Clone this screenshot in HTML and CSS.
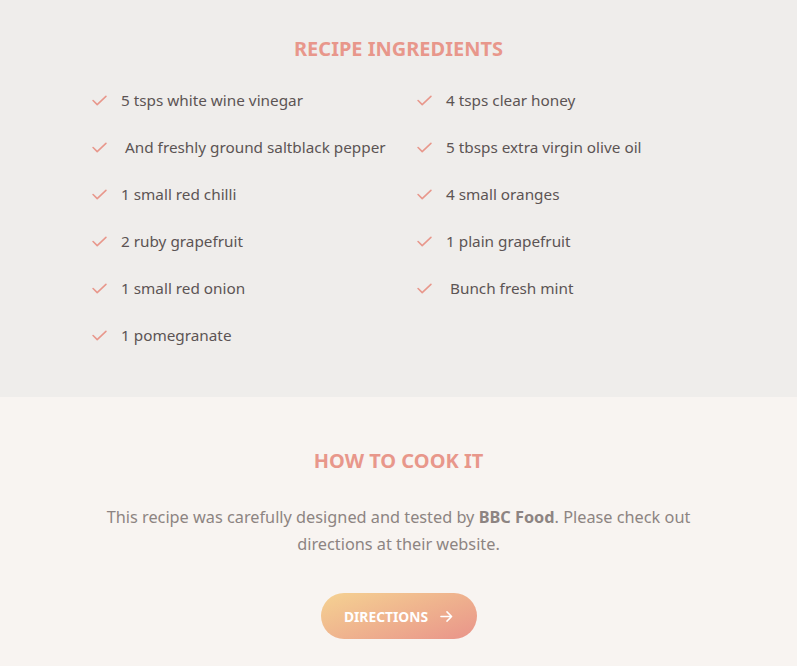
FILE: index.html
```html
<!DOCTYPE html>
<html lang="en">
<head>
<meta charset="utf-8">
<link rel="stylesheet" href="styles.css">
</head>
<body>
<section class="ingredients">
  <h2 class="title">RECIPE INGREDIENTS</h2>
  <ul class="list">
    <li><svg class="check" viewBox="0 0 16 12"><path d="M1 6 L5.5 10.5 L15 1.5"/></svg><span>5 tsps white wine vinegar</span></li>
    <li><svg class="check" viewBox="0 0 16 12"><path d="M1 6 L5.5 10.5 L15 1.5"/></svg><span>4 tsps clear honey</span></li>
    <li><svg class="check" viewBox="0 0 16 12"><path d="M1 6 L5.5 10.5 L15 1.5"/></svg><span class="lead">And freshly ground saltblack pepper</span></li>
    <li><svg class="check" viewBox="0 0 16 12"><path d="M1 6 L5.5 10.5 L15 1.5"/></svg><span>5 tbsps extra virgin olive oil</span></li>
    <li><svg class="check" viewBox="0 0 16 12"><path d="M1 6 L5.5 10.5 L15 1.5"/></svg><span>1 small red chilli</span></li>
    <li><svg class="check" viewBox="0 0 16 12"><path d="M1 6 L5.5 10.5 L15 1.5"/></svg><span>4 small oranges</span></li>
    <li><svg class="check" viewBox="0 0 16 12"><path d="M1 6 L5.5 10.5 L15 1.5"/></svg><span>2 ruby grapefruit</span></li>
    <li><svg class="check" viewBox="0 0 16 12"><path d="M1 6 L5.5 10.5 L15 1.5"/></svg><span>1 plain grapefruit</span></li>
    <li><svg class="check" viewBox="0 0 16 12"><path d="M1 6 L5.5 10.5 L15 1.5"/></svg><span>1 small red onion</span></li>
    <li><svg class="check" viewBox="0 0 16 12"><path d="M1 6 L5.5 10.5 L15 1.5"/></svg><span class="lead">Bunch fresh mint</span></li>
    <li><svg class="check" viewBox="0 0 16 12"><path d="M1 6 L5.5 10.5 L15 1.5"/></svg><span>1 pomegranate</span></li>
  </ul>
</section>
<section class="cook">
  <h2 class="title">HOW TO COOK IT</h2>
  <p class="desc">This recipe was carefully designed and tested by <strong>BBC Food</strong>. Please check out directions at their website.</p>
  <a class="btn" href="#">DIRECTIONS <svg class="arrow" viewBox="0 0 14 14"><path d="M1 7 H12.5 M7.5 2 L12.5 7 L7.5 12"/></svg></a>
</section>
</body>
</html>
```
FILE: styles.css
```css
* { box-sizing: border-box; }
html, body { margin: 0; padding: 0; }
body {
  font-family: "Noto Sans", "Open Sans", sans-serif;
  width: 797px;
  height: 666px;
  overflow: hidden;
  background: #f8f4f1;
}
.title {
  margin: 0;
  text-align: center;
  color: #e8978b;
  font-size: 20px;
  font-weight: 700;
  line-height: 26px;
}
.ingredients {
  background: #efedeb;
  height: 397px;
  padding-top: 36px;
}
.list {
  list-style: none;
  margin: 26px 0 0 92px;
  padding: 0;
  display: grid;
  grid-template-columns: 325px 325px;
  row-gap: 23px;
}
.list li {
  display: flex;
  align-items: center;
  height: 24px;
  color: #5c5454;
  font-size: 15.3px;
}
.check {
  width: 15px;
  height: 11px;
  margin-right: 14px;
  flex: none;
}
.check path {
  fill: none;
  stroke: #e8978b;
  stroke-width: 1.7;
  stroke-linecap: round;
  stroke-linejoin: round;
}
.lead { padding-left: 4px; }
.cook {
  padding-top: 51px;
  text-align: center;
}
.desc {
  margin: 30px auto 0;
  width: 620px;
  color: #8d8482;
  font-size: 16.3px;
  line-height: 27px;
}
.desc strong { font-weight: 700; }
.btn {
  display: inline-flex;
  align-items: center;
  justify-content: center;
  gap: 12px;
  margin-top: 35px;
  width: 156px;
  height: 46px;
  border-radius: 23px;
  background: linear-gradient(160deg, #f5d292 0%, #e9948a 100%);
  color: #fff;
  font-size: 13.8px;
  font-weight: 700;
  text-decoration: none;
}
.arrow { width: 13px; height: 13px; }
.arrow path {
  fill: none;
  stroke: #fff;
  stroke-width: 1.6;
  stroke-linecap: round;
  stroke-linejoin: round;
}
```
